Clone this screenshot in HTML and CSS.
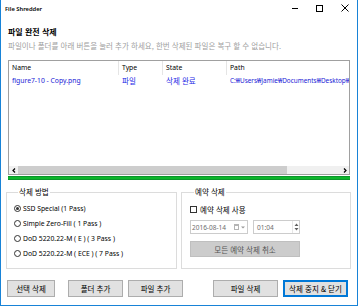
FILE: index.html
```html
<!DOCTYPE html>
<html lang="ko">
<head>
    <meta charset="UTF-8">
    <meta name="viewport" content="width=device-width, initial-scale=1.0">
    <title>File Shredder</title>
    <link rel="stylesheet" href="styles.css">
</head>
<body>

    <div class="window">
        <div class="titlebar">
            <span class="app-name">File Shredder</span>
            <div class="win-controls">
                <span class="win-btn min">
                    <svg width="6" height="6" viewBox="0 0 6 6"><path d="M0 3.5H6" stroke="#000" stroke-width="1"/></svg>
                </span>
                <span class="win-btn max">
                    <svg width="7" height="7" viewBox="0 0 7 7"><rect x="0.5" y="0.5" width="6" height="6" fill="none" stroke="#000" stroke-width="1"/></svg>
                </span>
                <span class="win-btn close">
                    <svg width="8" height="8" viewBox="0 0 8 8"><path d="M0.5 0.5L7.5 7.5M7.5 0.5L0.5 7.5" stroke="#000" stroke-width="1"/></svg>
                </span>
            </div>
        </div>

        <div class="header">
            <h1 class="page-title">파일 완전 삭제</h1>
            <p class="page-desc">파일이나 폴더를 아래 버튼을 눌러 추가 하세요, 한번 삭제된 파일은 복구 할 수 없습니다.</p>
        </div>

        <div class="list">
            <div class="list-head">
                <div class="col col-name">Name</div>
                <div class="col col-type">Type</div>
                <div class="col col-state">State</div>
                <div class="col col-path">Path</div>
            </div>
            <div class="list-body">
                <div class="list-row">
                    <div class="col col-name">figure7-10 - Copy.png</div>
                    <div class="col col-type ko">파일</div>
                    <div class="col col-state ko">삭제 완료</div>
                    <div class="col col-path">C:₩Users₩Jamie₩Documents₩Desktop₩</div>
                </div>
            </div>
            <div class="hscroll">
                <span class="scroll-arrow">
                    <svg width="4" height="5" viewBox="0 0 4 5"><path d="M3 0.5L1 2.5L3 4.5" fill="none" stroke="#000" stroke-width="1.2"/></svg>
                </span>
                <span class="scroll-thumb"></span>
                <span class="scroll-track"></span>
                <span class="scroll-arrow">
                    <svg width="4" height="5" viewBox="0 0 4 5"><path d="M1 0.5L3 2.5L1 4.5" fill="none" stroke="#000" stroke-width="1.2"/></svg>
                </span>
            </div>
        </div>

        <div class="progress"></div>

        <div class="options">
            <fieldset class="group group-method">
                <legend>삭제 방법</legend>
                <label class="option"><input type="radio" name="method" checked> SSD Special (1 Pass)</label>
                <label class="option"><input type="radio" name="method"> Simple Zero-Fill ( 1 Pass )</label>
                <label class="option"><input type="radio" name="method"> DoD 5220.22-M ( E ) ( 3 Pass )</label>
                <label class="option"><input type="radio" name="method"> DoD 5220.22-M ( ECE ) ( 7 Pass )</label>
            </fieldset>

            <fieldset class="group group-schedule">
                <legend>예약 삭제</legend>
                <label class="option ko"><input type="checkbox"> 예약 삭제 사용</label>
                <div class="pickers">
                    <div class="picker date-picker">
                        <span class="picker-value">2016-08-14</span>
                        <span class="cal-icon"></span>
                        <svg class="drop" width="4" height="3" viewBox="0 0 4 3"><path d="M0 0.5H4L2 2.5Z" fill="#9a9a9a"/></svg>
                    </div>
                    <div class="picker time-picker">
                        <span class="picker-value">01:04</span>
                        <span class="spinner">
                            <svg width="5" height="10" viewBox="0 0 5 10"><path d="M0.5 4L2.5 1.5L4.5 4Z M0.5 6L2.5 8.5L4.5 6Z" fill="#606060"/></svg>
                        </span>
                    </div>
                </div>
                <button class="cancel-all" disabled>모든 예약 삭제 취소</button>
            </fieldset>
        </div>

        <div class="actions">
            <button class="btn btn-select">선택 삭제</button>
            <button class="btn btn-folder">폴더 추가</button>
            <button class="btn btn-file">파일 추가</button>
            <button class="btn btn-wide btn-delete">파일 삭제</button>
            <button class="btn btn-wide btn-stop">삭제 중지 &amp; 닫기</button>
        </div>
    </div>

</body>
</html>
```

FILE: styles.css
```css
* {
    box-sizing: border-box;
}

body {
    margin: 0;
    font-family: "Noto Sans", "Noto Sans CJK KR", sans-serif;
    font-size: 6.8px;
    color: #000;
    background-color: #fff;
}

.ko {
    font-family: "Noto Sans CJK KR", sans-serif;
    font-size: 7.5px;
}

.window {
    width: 358px;
    height: 306px;
    border: 1px solid #1883d7;
    border-top: none;
    background-color: #fff;
    display: flex;
    flex-direction: column;
}

/* title bar */
.titlebar {
    height: 19px;
    display: flex;
    align-items: center;
    padding-left: 4px;
}

.app-name {
    font-size: 5.8px;
    font-weight: 600;
    line-height: 8px;
    margin-top: -2px;
}

.win-controls {
    margin-left: auto;
    display: flex;
    height: 19px;
}

.win-btn {
    display: flex;
    justify-content: center;
    align-items: center;
    width: 25px;
    padding-bottom: 3px;
}

.win-btn.min {
    width: 24px;
}

/* header */
.header {
    height: 41px;
    padding: 7px 0 0 7px;
}

.page-title {
    margin: 0;
    font-family: "Noto Sans CJK KR", sans-serif;
    font-size: 8px;
    font-weight: bold;
    line-height: 12px;
}

.page-desc {
    margin: 2px 0 0;
    font-family: "Noto Sans CJK KR", sans-serif;
    font-size: 7.5px;
    line-height: 11px;
    color: #a0a0a0;
    white-space: nowrap;
}

/* list view */
.list {
    margin: 0 7px;
    height: 115px;
    border: 1px solid #a0a0a0;
    display: flex;
    flex-direction: column;
}

.list-head, .list-row {
    display: flex;
    white-space: nowrap;
}

.list-head {
    height: 14px;
    align-items: center;
}

.list-head .col {
    height: 14px;
    line-height: 14px;
    border-right: 1px solid #e5e5e5;
}

.list-head .col-path {
    border-right: none;
}

.col {
    padding-left: 3px;
    overflow: hidden;
}

.col-name { width: 110px; }
.col-type { width: 44px; }
.col-state { width: 64px; }
.col-path { flex: 1; }

.list-body {
    flex: 1;
}

.list-row {
    height: 11px;
    line-height: 11px;
    color: #1a1ad6;
}

.list-row .ko {
    color: #1e28e6;
}

.list-row .col-path {
    font-size: 6.4px;
}

.hscroll {
    height: 8px;
    background-color: #f0f0f0;
    display: flex;
}

.scroll-arrow {
    width: 9px;
    display: flex;
    justify-content: center;
    align-items: center;
}

.scroll-thumb {
    width: 269px;
    background-color: #cdcdcd;
}

.scroll-track {
    flex: 1;
}

.progress {
    margin: 1px 7px 0;
    height: 4px;
    background-color: #0db52b;
    border-top: 1px solid #09962a;
    border-bottom: 1px solid #09962a;
}

/* option groups */
.options {
    display: flex;
    gap: 4px;
    margin: 7px 6px 0 5px;
    height: 82px;
}

.group {
    margin: 0;
    padding: 0;
    min-width: 0;
    border: 1px solid #dcdcdc;
}

.group legend {
    margin-left: 4px;
    padding: 0 1px;
    font-family: "Noto Sans CJK KR", sans-serif;
    font-size: 7.5px;
    line-height: 10px;
}

.group-method {
    width: 171px;
    padding: 4px 0 0 7px;
}

.group-schedule {
    flex: 1;
    padding: 5px 0 0 8px;
}

.option {
    display: flex;
    align-items: center;
    height: 15px;
    gap: 2px;
    white-space: nowrap;
}

.group-schedule .option {
    height: 14px;
    gap: 3px;
}

.option input {
    appearance: none;
    margin: 0;
    width: 7px;
    height: 7px;
    border: 1px solid #333;
    background-color: #fff;
    flex: none;
}

.option input[type="radio"] {
    border-radius: 50%;
    position: relative;
}

.option input[type="radio"]:checked::after {
    content: "";
    position: absolute;
    left: 1px;
    top: 1px;
    width: 3px;
    height: 3px;
    border-radius: 50%;
    background-color: #333;
}

.pickers {
    display: flex;
    gap: 5px;
    margin-top: 4px;
}

.picker {
    height: 14px;
    border: 1px solid #cccccc;
    background-color: #fff;
    display: flex;
    align-items: center;
    color: #6d6d6d;
    font-size: 6.5px;
}

.picker-value {
    padding-left: 1px;
}

.date-picker {
    width: 58px;
}

.cal-icon {
    margin-left: auto;
    width: 5px;
    height: 6px;
    border: 1px solid #b5b5b5;
    border-top-width: 2px;
}

.drop {
    margin: 0 2px 0 2px;
}

.time-picker {
    width: 47px;
    padding-left: 2px;
}

.spinner {
    margin-left: auto;
    width: 7px;
    height: 12px;
    display: flex;
    align-items: center;
    justify-content: center;
    border-left: 1px solid #e6e6e6;
}

.cancel-all {
    margin-top: 7px;
    width: 110px;
    height: 16px;
    padding: 0;
    background-color: #cccccc;
    border: 1px solid #bfbfbf;
    font-family: "Noto Sans CJK KR", sans-serif;
    font-size: 7.5px;
    color: #555;
}

/* bottom buttons */
.actions {
    display: flex;
    margin-top: 11px;
    padding: 0 9px 0 6px;
}

.btn {
    height: 17px;
    width: 55px;
    padding: 0;
    background-color: #e1e1e1;
    border: 1px solid #adadad;
    font-family: "Noto Sans CJK KR", sans-serif;
    font-size: 7.5px;
    color: #000;
}

.btn-select {
    width: 48px;
}

.btn-folder {
    margin-left: 13px;
}

.btn-file {
    margin-left: 5px;
}

.btn-wide {
    width: 65px;
}

.btn-delete {
    margin-left: auto;
}

.btn-stop {
    margin-left: 5px;
    border-color: #0078d7;
    box-shadow: inset 0 0 0 1px #0078d7;
}
```
